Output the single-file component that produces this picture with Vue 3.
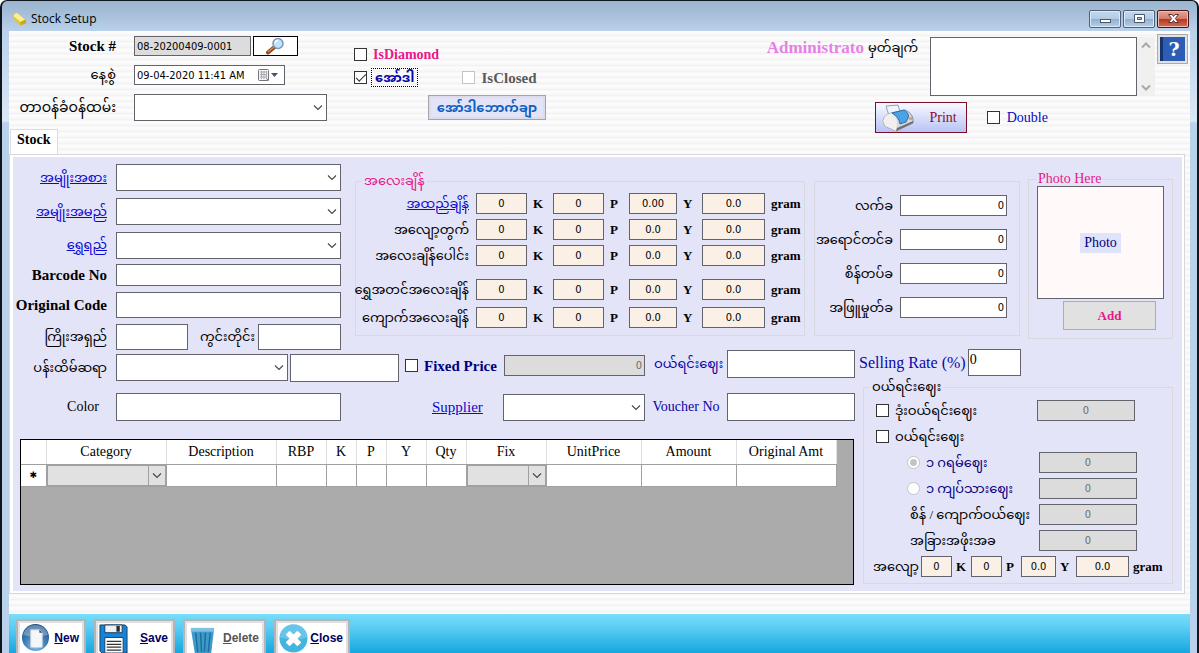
<script setup>
import { ref } from 'vue'

const chevron = 'M1 1.5 L5 5.5 L9 1.5'

const kinds = [
  { id: 'kind', label: 'အမျိုးအစား' },
  { id: 'item-name', label: 'အမျိုးအမည်' },
  { id: 'gold-quality', label: 'ရွှေရည်' }
]

const weights = [
  { id: 'w-item', label: 'အထည်ချိန်', link: true, y: '0.00' },
  { id: 'w-waste', label: 'အလျော့တွက်', y: '0.0' },
  { id: 'w-total', label: 'အလေးချိန်ပေါင်း', y: '0.0' },
  { id: 'w-gold', label: 'ရွှေအတင်အလေးချိန်', y: '0.0', spaced: true },
  { id: 'w-gem', label: 'ကျောက်အလေးချိန်', y: '0.0' }
]

const charges = [
  { id: 'c-labour', label: 'လက်ခ' },
  { id: 'c-polish', label: 'အရောင်တင်ခ' },
  { id: 'c-setting', label: 'စိန်တပ်ခ' },
  { id: 'c-white', label: 'အဖြူမှုတ်ခ' }
]

const columns = [
  { name: 'Category', width: 120, combo: true },
  { name: 'Description', width: 110 },
  { name: 'RBP', width: 50 },
  { name: 'K', width: 30 },
  { name: 'P', width: 30 },
  { name: 'Y', width: 40 },
  { name: 'Qty', width: 40 },
  { name: 'Fix', width: 80, combo: true },
  { name: 'UnitPrice', width: 95 },
  { name: 'Amount', width: 95 },
  { name: 'Original Amt', width: 100 }
]

const ordered = ref(true)
const priceUnit = ref('gram')
</script>

<template>
  <div class="window">
    <header class="titlebar">
      <svg class="app-icon" viewBox="0 0 16 16" aria-hidden="true">
        <path d="M1 5 Q2 2 5 2 L14 9 Q15 12 13 13 L8 14 L2 9 Z" fill="#e3c53a" />
        <path d="M1.500 5 Q3 2 5 2 L13 8.500 L8.500 11 Z" fill="#fbf08e" />
        <path d="M8.500 11 L13.500 8.500 Q15 12 13 13 L8 14 Z" fill="#d0a524" />
      </svg>
      <h1>Stock Setup</h1>
      <div class="caption">
        <button type="button" aria-label="Minimize">
          <svg viewBox="0 0 28 16"><rect x="9.500" y="8.500" width="10" height="3" fill="#fff" stroke="#4c5666" /></svg>
        </button>
        <button type="button" aria-label="Maximize">
          <svg viewBox="0 0 28 16"><path d="M9.500 3.500h10v8h-10z M12.500 6.500v2h4v-2z" fill="#fff" fill-rule="evenodd" stroke="#4c5666" /></svg>
        </button>
        <button type="button" class="close" aria-label="Close window">
          <svg viewBox="0 0 28 16"><path d="M9.500 3.500h3.500l1.500 2 1.500-2h3.500l-3.200 4 3.200 4h-3.500l-1.500-2-1.500 2h-3.500l3.200-4z" fill="#fff" stroke="#5b3434" /></svg>
        </button>
      </div>
    </header>

    <main class="client">
      <div class="head">
        <div class="head-left">
          <div class="head-fields">
            <div class="ids">
              <label for="stock-no" class="bold">Stock #</label>
              <div class="pair">
                <input id="stock-no" class="gray stock-no" value="08-20200409-0001" readonly>
                <button type="button" class="search" aria-label="Search">
                  <svg viewBox="0 0 20 18">
                    <path d="M2 15.500 L8 10.500" stroke="#8a4b2a" stroke-width="4" stroke-linecap="round" />
                    <path d="M2.500 14.500 L7.500 10.500" stroke="#d58b55" stroke-width="1.500" stroke-linecap="round" />
                    <circle cx="12" cy="6.500" r="5" fill="#bfe4fb" stroke="#7d93b8" stroke-width="1.500" />
                    <path d="M9 6 Q9.500 3.500 12 3.200" fill="none" stroke="#fff" stroke-width="1.500" />
                  </svg>
                </button>
              </div>
              <label for="date">နေ့စွဲ</label>
              <div class="date">
                <input id="date" value="09-04-2020 11:41 AM">
                <svg viewBox="0 0 24 14" aria-hidden="true">
                  <rect x="1.500" y="1.500" width="10" height="11" rx="1" fill="#f4f4f6" stroke="#77757a" />
                  <path d="M3 4h7M3 6.500h7M3 9h7M4.500 3v8M7 3v8M9.500 3v8" stroke="#a9a9b4" stroke-width="1" />
                  <path d="M9 12.500l3-3v3z" fill="#77757a" />
                  <path d="M14 5h7l-3.500 4z" fill="#44546e" />
                </svg>
              </div>
              <label for="staff" class="staff">တာဝန်ခံဝန်ထမ်း</label>
              <div class="combo">
                <select id="staff"><option></option></select>
                <svg viewBox="0 0 10 7"><path :d="chevron" /></svg>
              </div>
            </div>
            <div class="flags">
              <label class="check bold pink diamond"><input type="checkbox">IsDiamond</label>
              <div class="flag-row">
                <label class="check blue order"><input v-model="ordered" type="checkbox"><span class="focused">အော်ဒါ</span></label>
                <label class="check bold muted"><input type="checkbox" disabled>IsClosed</label>
              </div>
              <button type="button" class="voucher">အော်ဒါဘောက်ချာ</button>
            </div>
          </div>
          <div class="tabs" role="tablist">
            <button type="button" role="tab" aria-selected="true" class="tab">Stock</button>
          </div>
        </div>

        <div class="head-right">
          <div class="remark">
            <span class="user">Administrato</span>
            <label for="remark">မှတ်ချက်</label>
            <div class="memo">
              <textarea id="remark"></textarea>
              <div class="scroll" aria-hidden="true">
                <svg viewBox="0 0 10 7"><path d="M1 5.500 L5 1.500 L9 5.500" /></svg>
                <svg viewBox="0 0 10 7"><path :d="chevron" /></svg>
              </div>
            </div>
            <button type="button" class="help" aria-label="Help"><span>?</span></button>
          </div>
          <div class="print-row">
            <button type="button" class="print">
              <svg viewBox="0 0 32 28" aria-hidden="true">
                <path d="M4 2 L16 1 L19 11 L8 15 Z" fill="#eef6fd" stroke="#8ba4bd" />
                <path d="M1 17 Q2 11 9 9 L23 6 Q30 9 31 15 L31 19 L14 27 L3 22 Z" fill="#d9d9da" stroke="#8c8c8f" />
                <path d="M1 17 Q2 11 9 9 Q15 13 15 19 L14 27 L3 22 Z" fill="#f1f0ee" />
                <path d="M10 9 L22 6 Q28 10 26 14 L24 18 L18 20 Q17 13 10 9Z" fill="#4ba3e6" stroke="#2472b8" />
                <path d="M14 27 L31 19 L31 17 L15 24Z" fill="#6f6f72" />
                <rect x="27" y="13" width="3" height="3" fill="#e6a35b" />
              </svg>
              <span>Print</span>
            </button>
            <label class="check double"><input type="checkbox">Double</label>
          </div>
        </div>
      </div>

      <section class="page">
        <div class="upper">
          <div class="form">
            <template v-for="k in kinds" :key="k.id">
              <a :id="k.id + '-label'" href="#">{{ k.label }}</a>
              <div class="combo">
                <select :id="k.id" :aria-labelledby="k.id + '-label'"><option></option></select>
                <svg viewBox="0 0 10 7"><path :d="chevron" /></svg>
              </div>
            </template>
            <label for="barcode" class="bold">Barcode No</label>
            <input id="barcode">
            <label for="original-code" class="bold">Original Code</label>
            <input id="original-code">
            <label for="length">ကြိုးအရှည်</label>
            <div class="sizes">
              <input id="length">
              <label for="ring">ကွင်းတိုင်း</label>
              <input id="ring">
            </div>
          </div>

          <fieldset class="weights">
            <legend class="pink">အလေးချိန်</legend>
            <div v-for="w in weights" :key="w.id" class="weight" :class="{ spaced: w.spaced }">
              <a v-if="w.link" href="#">{{ w.label }}</a>
              <label v-else :for="w.id">{{ w.label }}</label>
              <input :id="w.id" class="cream" value="0" :aria-label="w.label + ' K'"><b>K</b>
              <input class="cream" value="0" :aria-label="w.label + ' P'"><b>P</b>
              <input class="cream" :value="w.y" :aria-label="w.label + ' Y'"><b>Y</b>
              <input class="cream" value="0.0" :aria-label="w.label + ' gram'"><b>gram</b>
            </div>
          </fieldset>

          <fieldset class="charges">
            <template v-for="c in charges" :key="c.id">
              <label :for="c.id">{{ c.label }}</label>
              <input :id="c.id" class="right" value="0">
            </template>
          </fieldset>

          <fieldset class="photo">
            <legend class="pink">Photo Here</legend>
            <div class="frame"><span>Photo</span></div>
            <button type="button" class="add">Add</button>
          </fieldset>
        </div>

        <div class="lower">
          <div class="lower-left">
            <div class="line first">
              <label for="smith">ပန်းထိမ်ဆရာ</label>
              <div class="smith">
                <div class="combo">
                  <select id="smith"><option></option></select>
                  <svg viewBox="0 0 10 7"><path :d="chevron" /></svg>
                </div>
                <input aria-label="ပန်းထိမ်ဆရာ">
              </div>
              <div class="fixed">
                <label class="check bold navy"><input type="checkbox">Fixed Price</label>
                <input class="gray right" value="0" disabled aria-label="Fixed Price">
              </div>
              <label for="cost" class="blue cost">ဝယ်ရင်းဈေး</label>
              <input id="cost" class="cost">
            </div>
            <div class="line">
              <label for="color" class="color">Color</label>
              <input id="color" class="color-box">
              <div class="supplier">
                <a id="supplier-label" href="#">Supplier</a>
                <div class="combo">
                  <select aria-labelledby="supplier-label"><option></option></select>
                  <svg viewBox="0 0 10 7"><path :d="chevron" /></svg>
                </div>
              </div>
              <label for="voucher-no" class="blue voucher-label">Voucher No</label>
              <input id="voucher-no">
            </div>
            <div class="grid-box">
              <table>
                <colgroup>
                  <col class="marker">
                  <col v-for="c in columns" :key="c.name" :style="{ width: c.width + 'px' }">
                </colgroup>
                <thead>
                  <tr><th></th><th v-for="c in columns" :key="c.name" scope="col">{{ c.name }}</th></tr>
                </thead>
                <tbody>
                  <tr>
                    <td class="new-row">✱</td>
                    <td v-for="c in columns" :key="c.name">
                      <div v-if="c.combo" class="combo cell">
                        <select :aria-label="c.name"><option></option></select>
                        <svg viewBox="0 0 10 7"><path :d="chevron" /></svg>
                      </div>
                    </td>
                  </tr>
                </tbody>
              </table>
            </div>
          </div>

          <div class="lower-right">
            <div class="rate">
              <label for="rate">Selling Rate (%)</label>
              <input id="rate" value="0">
            </div>
            <fieldset class="prices">
              <legend>ဝယ်ရင်းဈေး</legend>
              <div class="price">
                <label class="check"><input type="checkbox">ဒုံးဝယ်ရင်းဈေး</label>
                <input class="gray" value="0" disabled aria-label="ဒုံးဝယ်ရင်းဈေး">
              </div>
              <div class="price">
                <label class="check"><input type="checkbox">ဝယ်ရင်းဈေး</label>
              </div>
              <div class="price sub">
                <label class="check navy"><input v-model="priceUnit" type="radio" name="unit" value="gram" disabled>၁ ဂရမ်ဈေး</label>
                <input class="gray" value="0" disabled aria-label="၁ ဂရမ်ဈေး">
              </div>
              <div class="price sub">
                <label class="check navy"><input v-model="priceUnit" type="radio" name="unit" value="kyat" disabled>၁ ကျပ်သားဈေး</label>
                <input class="gray" value="0" disabled aria-label="၁ ကျပ်သားဈေး">
              </div>
              <div class="price sub">
                <label for="gem-price">စိန် / ကျောက်ဝယ်ဈေး</label>
                <input id="gem-price" class="gray" value="0" disabled>
              </div>
              <div class="price sub">
                <label for="other-price">အခြားအဖိုးအခ</label>
                <input id="other-price" class="gray" value="0" disabled>
              </div>
              <div class="loss">
                <label for="loss">အလျော့</label>
                <input id="loss" class="cream" value="0"><b>K</b>
                <input class="cream" value="0" aria-label="P"><b>P</b>
                <input class="cream" value="0.0" aria-label="Y"><b>Y</b>
                <input class="cream" value="0.0" aria-label="gram"><b>gram</b>
              </div>
            </fieldset>
          </div>
        </div>
      </section>

      <footer class="toolbar">
        <button type="button" class="new">
          <svg viewBox="0 0 30 30" aria-hidden="true">
            <defs>
              <radialGradient id="orb" cx="0.5" cy="0.8" r="0.8">
                <stop offset="0" stop-color="#8cc4ea" /><stop offset="0.5" stop-color="#3f7fb8" /><stop offset="1" stop-color="#1b4c80" />
              </radialGradient>
            </defs>
            <circle cx="15" cy="14" r="14" fill="url(#orb)" />
            <path d="M2 11 Q5 1 15 1 Q25 1 28 11 Q15 15 2 11Z" fill="#fff" opacity="0.3" />
            <path d="M10 6h9l3 3v15q-6 1-12 0z" fill="#f4f7fa" stroke="#c2cdd8" />
            <path d="M19 6v3h3z" fill="#34465a" />
          </svg>
          <span><u>N</u>ew</span>
        </button>
        <button type="button" class="save">
          <svg viewBox="0 0 30 30" aria-hidden="true">
            <path d="M1 1h26l2 2v27H3l-2-2z" fill="#1583d8" stroke="#173f66" />
            <path d="M6 1h18v8H6z" fill="#eef0f2" stroke="#173f66" />
            <path d="M18 2h3.500v6H18z" fill="#2b2b2b" />
            <path d="M6 14h19v16H6z" fill="#fff" stroke="#173f66" />
            <path d="M8 18h15M8 21h15M8 24h15M8 27h15" stroke="#333" stroke-width="1.200" />
          </svg>
          <span><u>S</u>ave</span>
        </button>
        <button type="button" class="delete" disabled>
          <svg viewBox="0 0 30 30" aria-hidden="true">
            <path d="M3 5 L27 5 L24 30 L7 30 Z" fill="#3d9ac9" />
            <path d="M3 4h24v4H3z" fill="#7fc1e2" />
            <path d="M8 9l2 20M13 9l1 20M18 9l-1 20M23 9l-2 20" stroke="#1f6d9c" stroke-width="1.500" />
          </svg>
          <span><u>D</u>elete</span>
        </button>
        <button type="button" class="exit">
          <svg viewBox="0 0 30 30" aria-hidden="true">
            <circle cx="15" cy="15" r="14.500" fill="#42b4e0" />
            <path d="M1 14 A14 14 0 0 1 29 14 Q15 18 1 14Z" fill="#7fd0ef" opacity="0.6" />
            <path d="M8 11l3-3 4 4 4-4 3 3-4 4 4 4-3 3-4-4-4 4-3-3 4-4z" fill="#fff" stroke="#fff" stroke-width="1.500" stroke-linejoin="round" />
          </svg>
          <span><u>C</u>lose</span>
        </button>
      </footer>
    </main>
  </div>
</template>

<style>
html,
body {
  margin: 0;
  overflow: hidden;
}
</style>

<style scoped>
* {
  box-sizing: border-box;
}

.window {
  height: 100vh;
  display: flex;
  flex-direction: column;
  padding: 0 6px;
  border: solid #10161d;
  border-width: 1px 2px 0;
  border-radius: 7px 7px 0 0;
  background: linear-gradient(#9ab4cf 0, #a8c0da 14px, #b9d1ea 30px, #dbe8f5 120px, #b9d1ea 122px);
  font: 13px/20px "Liberation Serif", "Noto Sans Myanmar", "Myanmar Text", Padauk, serif;
  color: #000;
  overflow: hidden;
}

.titlebar {
  display: flex;
  align-items: center;
  flex: none;
  height: 30px;
  padding: 6px 2px 0 4px;
}

.app-icon {
  width: 16px;
  height: 16px;
}

h1 {
  margin: 0 auto 0 3px;
  font: 12px/18px "Open Sans", "Noto Sans", sans-serif;
}

.caption {
  display: flex;
  gap: 2px;
}

.caption button {
  width: 32px;
  height: 18px;
  padding: 0;
  border: 1px solid #4f6079;
  border-radius: 2px;
  background: linear-gradient(#c5d8ec 0, #b2cbe4 50%, #8fafd0 50%, #b4d0ea 100%);
  box-shadow: inset 0 0 0 1px #dce9f6;
}

.caption .close {
  border-color: #4d1719;
  background: linear-gradient(#e3a498 0, #d27a68 50%, #b8321c 50%, #d3705a 100%);
  box-shadow: inset 0 0 0 1px #eebcae;
}

.caption svg {
  display: block;
  width: 28px;
  height: 16px;
  margin: auto;
}

.client {
  flex: 1;
  min-height: 0;
  display: flex;
  flex-direction: column;
  margin-right: 1px;
  margin-left: 1px;
  background: repeating-linear-gradient(#fdfdfd 0, #f9f9f9 3px, #f1f1f1 5px, #fdfdfd 6px);
}

/* shared controls */
input,
select,
textarea,
button {
  margin: 0;
  min-width: 0;
  font: 11px "DejaVu Sans Condensed", "DejaVu Sans", sans-serif;
  color: #000;
}

input:not([type]),
select,
textarea {
  width: 100%;
  height: 100%;
  padding: 0 2px;
  border: 1px solid #63636b;
  border-radius: 0;
  background: #fff;
  outline: 0;
}

select {
  grid-area: 1 / 1;
  appearance: none;
}

.combo {
  display: grid;
  height: 27px;
  min-width: 0;
}

.combo svg {
  grid-area: 1 / 1;
  align-self: center;
  justify-self: end;
  width: 10px;
  height: 7px;
  margin-right: 4px;
  pointer-events: none;
}

.combo path,
.scroll path {
  fill: none;
  stroke: #4a4a4a;
  stroke-width: 1.2;
}

input.gray:not([type]) {
  background: #dcdcdc;
  color: #6d6d6d;
  text-align: center;
}

input.cream:not([type]) {
  background: #fbf0e6;
  text-align: center;
}

input.right:not([type]) {
  text-align: right;
}

label,
a,
legend {
  white-space: nowrap;
}

a {
  color: #0a0ad0;
}

.bold {
  font-size: 15px;
  font-weight: bold;
}

b {
  font-size: 13px;
}

.pink {
  color: #e8178a;
}

.blue {
  color: #0505a8;
}

.navy {
  color: #000080;
}

.muted {
  color: #5a5a5a;
}

.check {
  display: flex;
  align-items: center;
  gap: 6px;
}

.check input {
  flex: none;
  display: grid;
  place-items: center;
  width: 13px;
  height: 13px;
  border: 1px solid #333;
  background: #fff;
  appearance: none;
}

.check input[type="checkbox"]:checked::after {
  content: "";
  width: 9px;
  height: 4px;
  margin-bottom: 3px;
  border: solid #333;
  border-width: 0 0 1px 1px;
  transform: rotate(-45deg);
}

.check input[type="radio"] {
  border-radius: 50%;
}

.check input[type="radio"]:checked::after {
  content: "";
  width: 7px;
  height: 7px;
  border-radius: 50%;
  background: #c4c4c4;
}

.check input:disabled {
  border-color: #c4c4c4;
}

/* header */
.head {
  display: flex;
  justify-content: space-between;
  flex: none;
}

.head-left {
  display: flex;
  flex-direction: column;
  justify-content: space-between;
}

.head-fields {
  display: flex;
  gap: 27px;
  padding-top: 5px;
}

.ids {
  display: grid;
  grid-template-columns: 107px 193px;
  grid-template-rows: 20px 20px 27px;
  gap: 9px 18px;
}

.ids > label,
.form > label,
.form > a {
  align-self: center;
  justify-self: end;
}

.staff {
  font-size: 14px;
}

.pair {
  display: flex;
  gap: 2px;
}

input.stock-no:not([type]) {
  width: 117px;
  color: #000;
  text-align: left;
}

.search {
  width: 45px;
  padding: 0;
  border: 1px solid #000;
  background: #fff;
}

.search svg {
  display: block;
  width: 20px;
  height: 18px;
  margin: auto;
}

.date {
  display: grid;
  width: 151px;
}

.date input {
  grid-area: 1 / 1;
}

.date svg {
  grid-area: 1 / 1;
  justify-self: end;
  align-self: center;
  width: 24px;
  height: 14px;
  margin-right: 4px;
}

.flags {
  display: grid;
  grid-template-rows: 23px 23px 25px;
  justify-items: start;
  padding-top: 7px;
}

.diamond {
  font-size: 14px;
}

.flag-row {
  display: flex;
  gap: 44px;
}

.order {
  gap: 4px;
  font-weight: bold;
}

.focused {
  padding: 0 3px;
  border: 1px dotted #000;
  line-height: 17px;
}

.voucher {
  width: 118px;
  height: 25px;
  margin: 6px 0 0 74px;
  padding: 0;
  border: 1px solid #a5a5a8;
  background: #e4e4f8;
  box-shadow: inset 0 0 0 2px #dcdcec;
  color: #0e5fc0;
  font: bold 13px/20px "Liberation Serif", "Noto Sans Myanmar", "Myanmar Text", Padauk, serif;
  white-space: nowrap;
}

.tab {
  height: 26px;
  margin: 0 0 -1px 1px;
  padding: 0 7px 5px 6px;
  border: 1px solid #dcdcdc;
  border-bottom: 0;
  background: #fff;
  font: bold 14px/20px "Liberation Serif", serif;
}

.tabs {
  display: flex;
}

.head-right {
  display: flex;
  flex-direction: column;
  gap: 6px;
  height: 123px;
  padding: 3px 2px 0 0;
}

.remark {
  display: flex;
  justify-content: flex-end;
  align-items: flex-start;
}

.user {
  margin: 4px 4px 0 0;
  color: #e680e6;
  font-size: 17px;
  font-weight: bold;
}

.remark label {
  width: 62px;
  padding-top: 4px;
}

.memo {
  display: flex;
  width: 225px;
  height: 59px;
  margin: 3px 2px 0 0;
}

.memo textarea {
  flex: 1;
  resize: none;
  overflow: hidden;
}

.scroll {
  display: flex;
  flex-direction: column;
  justify-content: space-between;
  align-items: center;
  width: 18px;
  padding: 5px 0;
  background: #f0f0f0;
}

.scroll svg {
  width: 10px;
  height: 7px;
}

.scroll path {
  stroke: #a8a8a8;
  stroke-width: 2;
}

.help {
  width: 31px;
  height: 30px;
  padding: 2px;
  border: 1px solid #aaa;
  background: #e2e2e2;
}

.help span {
  display: block;
  border-left: 3px solid #14336f;
  background: #2e5db5;
  color: #fff;
  font: bold 19px/24px "DejaVu Serif", serif;
}

.print-row {
  display: flex;
  align-items: center;
  gap: 20px;
  margin-left: 108px;
}

.print {
  display: flex;
  align-items: center;
  justify-content: space-between;
  width: 92px;
  height: 31px;
  padding: 0 9px 0 6px;
  border: 1px solid #7b0f28;
  background: linear-gradient(#fafaff, #b7c3f5);
  color: #8f0a28;
  font: 14px/20px "Liberation Serif", serif;
}

.print svg {
  width: 32px;
  height: 28px;
}

.double {
  gap: 7px;
  color: #0808c4;
  font-size: 14px;
}

/* stock page */
.page {
  flex: none;
  margin: 0 5px 0 0;
  border: solid #fff;
  border-width: 3px 3px 3px 4px;
  outline: 1px solid #d8d8d8;
  outline-offset: -1px;
  padding: 0 9px 6px 0;
  background: #e4e4f8;
}

.upper {
  display: grid;
  grid-template-columns: 328px minmax(0, 464fr) minmax(0, 215fr) minmax(0, 153fr);
  height: 192px;
}

.form {
  display: grid;
  grid-template-columns: 94px 225px;
  grid-template-rows: 28px 28px 26px 22px 26px 26px;
  gap: 6px 9px;
  align-content: start;
  padding-top: 7px;
}

.sizes {
  display: grid;
  grid-template-columns: 72px 1fr 83px;
  align-items: center;
}

.sizes label {
  justify-self: end;
  padding-right: 3px;
}

fieldset {
  margin: 0;
  min-width: 0;
  padding: 0;
  border: 1px solid #d8d8e0;
}

legend {
  margin-left: 6px;
  padding: 0 2px;
  line-height: 14px;
}

.weights {
  height: 162px;
  margin: 17px 0 0 14px;
  padding-top: 5px;
}

.weight {
  display: grid;
  grid-template-columns: minmax(0, 1fr) 51px 26px 51px 25px 48px 25px 63px 39px;
  align-items: center;
  height: 21px;
  margin-bottom: 5px;
}

.weight.spaced {
  margin: 13px 0 7px;
}

.weight > label,
.weight > a {
  justify-self: end;
  margin-right: 7px;
}

.weight b {
  padding-left: 6px;
}

.charges {
  display: grid;
  grid-template-columns: minmax(0, 1fr) 107px;
  grid-auto-rows: 21px;
  gap: 13px 7px;
  height: 155px;
  margin: 24px 0 0 9px;
  padding: 13px 12px 0 0;
  align-items: center;
}

.charges label {
  justify-self: end;
}

.photo {
  height: 167px;
  margin: 15px 0 0 8px;
  padding: 0 8px;
}

.photo legend {
  margin-left: 0;
  padding: 0 1px;
  font-size: 14px;
}

.frame {
  display: grid;
  place-items: center;
  height: 113px;
  border: 1px solid #63636b;
  background: #fff9f9;
  font-size: 14px;
}

.frame span {
  padding: 0 4px;
  background: #e0e4fa;
  color: #000080;
}

.add {
  display: block;
  width: 93px;
  height: 29px;
  margin: 2px 8px 0 auto;
  border: 1px solid #adadad;
  background: #e1e1e1;
  color: #e8178a;
  font: bold 13px/20px "Liberation Serif", serif;
}

.lower {
  display: grid;
  grid-template-columns: minmax(0, 842fr) minmax(0, 314fr);
  gap: 4px;
}

.lower-left {
  padding-top: 1px;
}

.line {
  display: grid;
  grid-template-columns: 94px 283px 237px minmax(0, 1fr) 128px;
  column-gap: 9px;
  align-items: center;
  height: 36px;
}

.line.first {
  margin-bottom: 3px;
}

.line > label:first-child {
  justify-self: end;
}

.line > input:not([type]),
.smith input:not([type]) {
  height: 28px;
}

.line > .cost {
  align-self: start;
  line-height: 28px;
}

.line > .voucher-label {
  justify-self: center;
  font-size: 14px;
}

.smith {
  display: grid;
  grid-template-columns: 172px 1fr;
  gap: 2px;
}

.fixed {
  display: grid;
  grid-template-columns: 99px 141px;
  align-items: center;
  align-self: start;
  margin-left: -3px;
  padding-top: 5px;
}

.fixed input.gray {
  height: 21px;
  text-align: right;
}

.line > .color {
  padding-right: 8px;
  font-size: 14px;
}

.line > .color-box:not([type]) {
  width: 225px;
}

.supplier {
  display: grid;
  grid-template-columns: 71px 142px;
  justify-content: end;
  align-items: center;
  font-size: 15px;
}

.grid-box {
  height: 146px;
  margin: 14px 1px 0 7px;
  border: 1px solid #000;
  background: #ababab;
  overflow: hidden;
}

table {
  width: 815px;
  table-layout: fixed;
  border-collapse: collapse;
  background: #fff;
}

col.marker {
  width: 25px;
}

th,
td {
  padding: 0;
  border-right: 1px solid #a0a0a0;
  border-bottom: 1px solid #a0a0a0;
}

th {
  height: 24px;
  border-right-color: #e0e0e0;
  font-size: 14px;
  font-weight: normal;
}

td {
  height: 21px;
}

.new-row {
  font: 9px/12px "DejaVu Sans", sans-serif;
  text-align: center;
}

.cell {
  height: 21px;
}

.cell select {
  border: 1px solid #a0a0a0;
  background: #e1e1e1;
}

.cell svg {
  box-sizing: content-box;
  height: 19px;
  margin-right: 1px;
  padding: 0 3px;
  border-left: 1px solid #a0a0a0;
}

.rate {
  display: flex;
  align-items: center;
  gap: 2px;
  height: 27px;
  color: #0808a8;
  font-size: 16px;
}

.rate input:not([type]) {
  width: 53px;
  padding: 0 1px 6px;
  font: 14px/16px "Liberation Serif", serif;
}

.prices {
  height: 204px;
  margin: 4px 0 0 4px;
}

.price {
  display: flex;
  align-items: center;
  justify-content: space-between;
  height: 21px;
  margin: 0 37px 5px 12px;
}

legend + .price {
  margin-top: 6px;
}

.price input.gray {
  width: 98px;
}

.price.sub {
  margin: 0 35px 5px 43px;
}

.price.sub > label:not(.check) {
  margin-left: 3px;
}

.loss {
  display: grid;
  grid-template-columns: minmax(0, 1fr) 31px 19px 31px 19px 35px 20px 53px 43px;
  align-items: center;
  height: 21px;
  margin-left: 9px;
}

.loss b {
  padding-left: 4px;
}

/* command bar */
.toolbar {
  flex: none;
  display: flex;
  gap: 8px;
  height: 48px;
  margin-top: 20px;
  padding: 5px 7px;
  background: linear-gradient(#78defa 0, #5accf3 14px, #12a6de 40px);
}

.toolbar button {
  display: flex;
  align-items: center;
  justify-content: space-between;
  height: 38px;
  padding: 0 5px 0 3px;
  border: 2px solid #b4b4b8;
  background: #fff;
  box-shadow: inset 0 0 0 2px #e0e0e2;
  color: #000066;
  font: bold 12px/16px "Liberation Sans", sans-serif;
}

.toolbar svg {
  flex: none;
  width: 29px;
  height: 29px;
}

.toolbar .new {
  width: 70px;
}

.toolbar .save {
  width: 81px;
}

.toolbar .delete {
  width: 83px;
  color: #555;
}

.toolbar .exit {
  width: 76px;
}
</style>
